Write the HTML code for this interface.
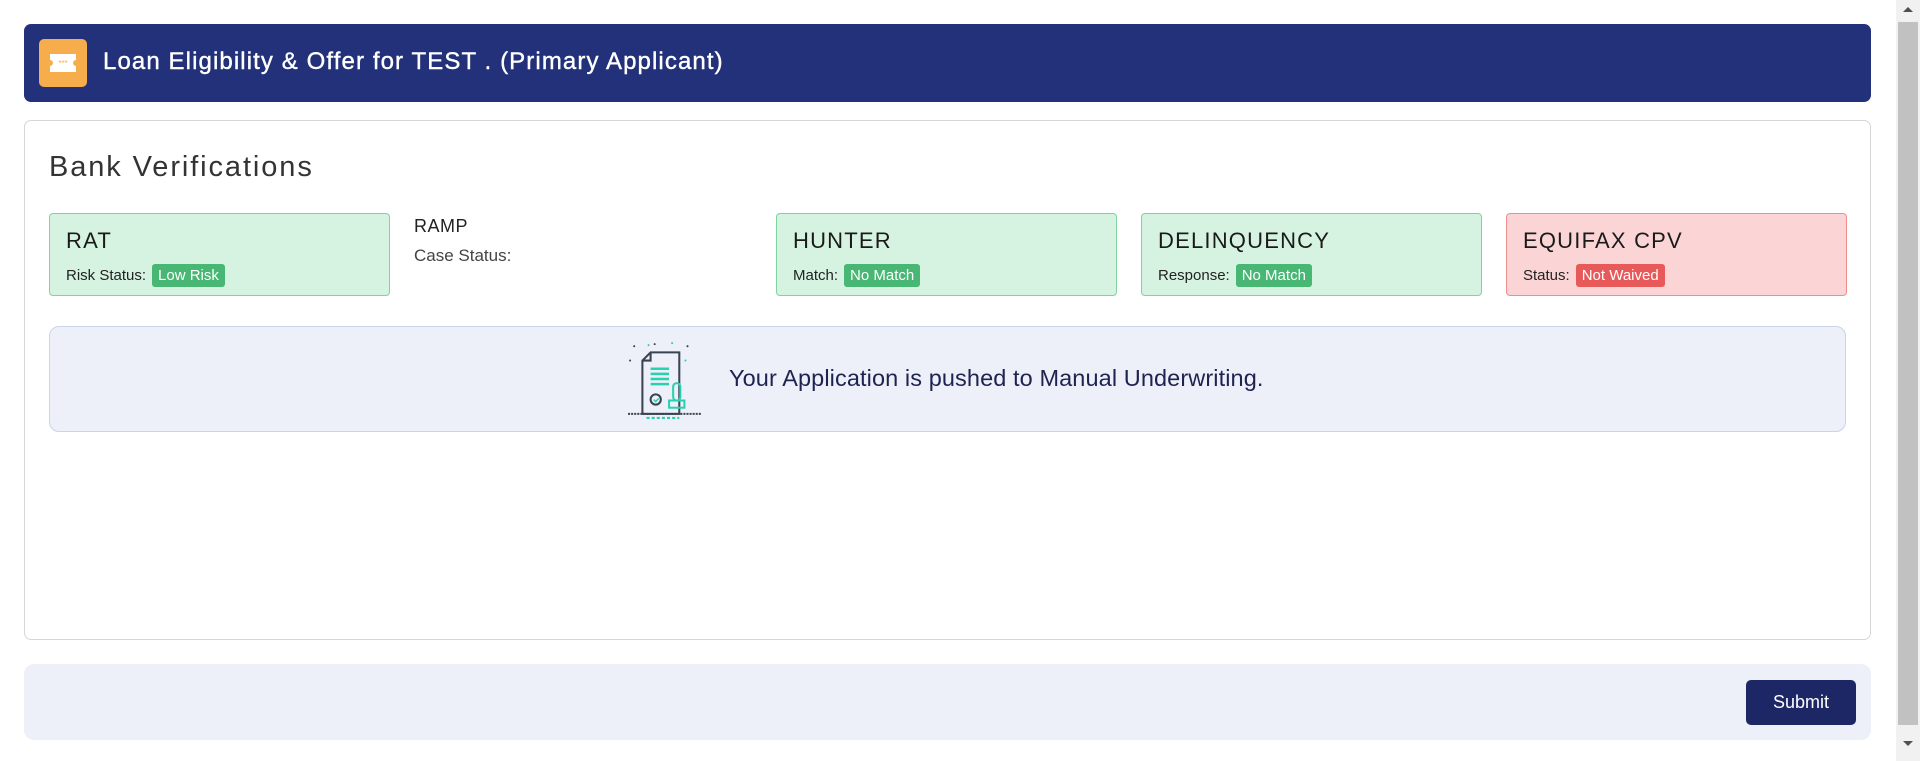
<!DOCTYPE html>
<html><head><meta charset="utf-8"><style>
*{box-sizing:border-box;margin:0;padding:0}
body{width:1920px;height:761px;overflow:hidden;background:#fff;font-family:"Liberation Sans",sans-serif;position:relative}
.hdr{position:absolute;left:24px;top:24px;width:1847px;height:78px;background:#23307a;border-radius:7px}
.hicon{position:absolute;left:15px;top:15px;width:48px;height:48px;background:#f8ad4c;border-radius:5px}
.htitle{position:absolute;left:79px;top:24px;color:#fff;font-size:24px;letter-spacing:1.1px;-webkit-text-stroke:0.4px #fff}
.card{position:absolute;left:24px;top:120px;width:1847px;height:520px;border:1px solid #d6d6d6;border-radius:7px}
.bv{position:absolute;left:49px;top:151px;font-size:29px;color:#333;letter-spacing:1.9px}
.box{position:absolute;top:213px;width:341px;height:83px;border:1px solid #7fd39c;background:#d6f3e1;border-radius:4px}
.box.red{border-color:#f08e8e;background:#fbd5d6}
.bt{position:absolute;left:16px;top:14px;font-size:22px;color:#1a1a1a;letter-spacing:1.2px}
.row{position:absolute;left:16px;top:50px;font-size:15px;color:#222;display:flex;align-items:center}
.badge{display:inline-block;margin-left:6px;background:#48b774;color:#fff;padding:3px 6px;border-radius:3px;font-size:15px}
.red .badge{background:#e85a5a}
.ramp{position:absolute;left:414px;top:216px;font-size:18px;color:#222;letter-spacing:0.5px}
.ramp2{position:absolute;left:414px;top:246px;font-size:17px;color:#444}
.banner{position:absolute;left:49px;top:326px;width:1797px;height:106px;background:#edf0f8;border:1px solid #c9d3ea;border-radius:10px}
.btext{position:absolute;left:729px;top:365px;font-size:23.5px;color:#1e2350;letter-spacing:0.1px}
.foot{position:absolute;left:24px;top:664px;width:1847px;height:76px;background:#edf0f8;border-radius:10px}
.sub{position:absolute;left:1746px;top:680px;width:110px;height:45px;background:#1e2766;border-radius:5px;color:#fff;font-size:18px;text-align:center;line-height:45px}
.sb{position:absolute;left:1896px;top:0;width:24px;height:761px;background:#f1f1f1}
.thumb{position:absolute;left:1898px;top:22px;width:20px;height:703px;background:#c1c1c1}
</style></head><body>
<div class="hdr"><div class="hicon"><svg width="48" height="48" viewBox="0 0 48 48"><path d="M11 15h26v6a3 3 0 0 0 0 6v6H11v-6a3 3 0 0 0 0-6z" fill="#fff"/><text x="24" y="27" font-size="8" fill="#f8ad4c" text-anchor="middle" font-family="Liberation Sans">***</text></svg></div><div class="htitle">Loan Eligibility &amp; Offer for TEST . (Primary Applicant)</div></div>
<div class="card"></div>
<div class="bv">Bank Verifications</div>
<div class="box" style="left:49px"><div class="bt">RAT</div><div class="row">Risk Status:<span class="badge">Low Risk</span></div></div>
<div class="ramp">RAMP</div><div class="ramp2">Case Status:</div>
<div class="box" style="left:776px"><div class="bt">HUNTER</div><div class="row">Match:<span class="badge">No Match</span></div></div>
<div class="box" style="left:1141px"><div class="bt">DELINQUENCY</div><div class="row">Response:<span class="badge">No Match</span></div></div>
<div class="box red" style="left:1506px"><div class="bt">EQUIFAX CPV</div><div class="row">Status:<span class="badge">Not Waived</span></div></div>
<div class="banner"></div>
<svg style="position:absolute;left:626px;top:338px" width="82" height="82" viewBox="0 0 80 80">
<g fill="#3a4352"><circle cx="8" cy="8" r="1"/><circle cx="28" cy="6" r="1"/><circle cx="60" cy="8" r="1"/><circle cx="4" cy="22" r="1"/></g>
<g fill="#2ad1b0"><circle cx="22" cy="7" r="1"/><circle cx="45" cy="5" r="1"/><circle cx="58" cy="22" r="1"/><circle cx="52" cy="16" r="1"/></g>
<path d="M16 22l8-8h28v60H16z" fill="none" stroke="#3a4352" stroke-width="2"/><path d="M16 22h8v-8" fill="none" stroke="#3a4352" stroke-width="2"/>
<g stroke="#2ad1b0" stroke-width="2.5"><line x1="24" y1="30" x2="42" y2="30"/><line x1="24" y1="35" x2="42" y2="35"/><line x1="24" y1="40" x2="42" y2="40"/><line x1="24" y1="45" x2="42" y2="45"/></g>
<circle cx="29" cy="60" r="5" fill="none" stroke="#3a4352" stroke-width="2"/><path d="M27 60l2 2 3-3" fill="none" stroke="#2ad1b0" stroke-width="1.5"/>
<rect x="46" y="44" width="7" height="17" rx="3.5" fill="none" stroke="#2ad1b0" stroke-width="2"/><rect x="42" y="61" width="15" height="7" fill="none" stroke="#2ad1b0" stroke-width="2"/>
<line x1="2" y1="74" x2="74" y2="74" stroke="#3a4352" stroke-width="2" stroke-dasharray="2 1"/><line x1="20" y1="78" x2="52" y2="78" stroke="#2ad1b0" stroke-width="2" stroke-dasharray="3 2"/>
</svg>
<div class="btext">Your Application is pushed to Manual Underwriting.</div>
<div class="foot"></div>
<div class="sub">Submit</div>
<div class="sb"></div><div class="thumb"></div>
<svg style="position:absolute;left:1901px;top:4px" width="14" height="10"><path d="M2 8l5-5 5 5z" fill="#505050"/></svg>
<svg style="position:absolute;left:1901px;top:739px" width="14" height="10"><path d="M2 2l5 5 5-5z" fill="#505050"/></svg>
</body></html>
